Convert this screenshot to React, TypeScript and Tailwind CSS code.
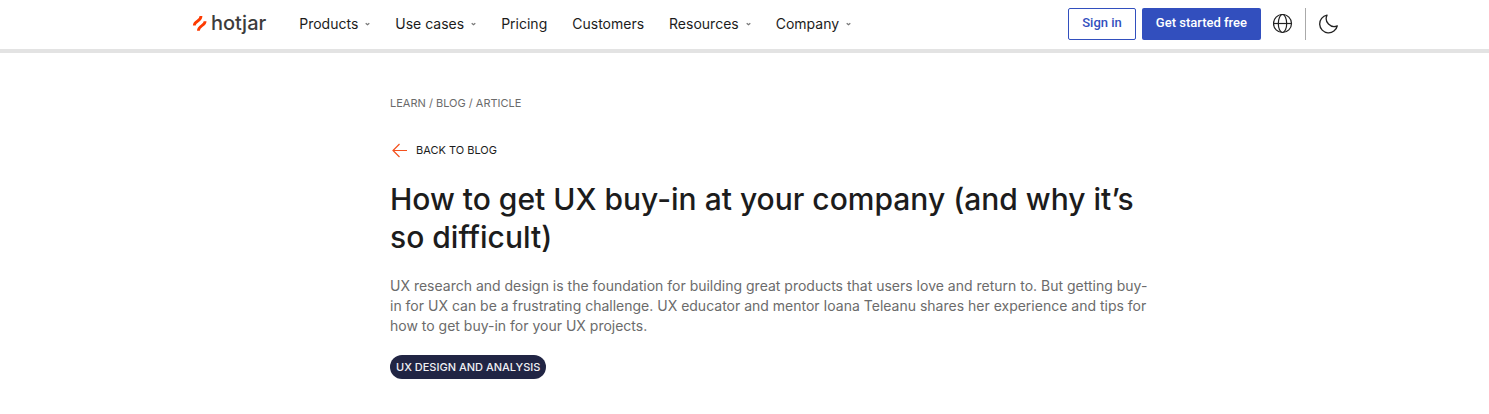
import type { ReactNode } from 'react';

interface NavItem {
  label: string;
  hasMenu: boolean;
}

const NAV_ITEMS: NavItem[] = [
  { label: 'Products', hasMenu: true },
  { label: 'Use cases', hasMenu: true },
  { label: 'Pricing', hasMenu: false },
  { label: 'Customers', hasMenu: false },
  { label: 'Resources', hasMenu: true },
  { label: 'Company', hasMenu: true },
];

function Logo() {
  return (
    <a href="#" aria-label="hotjar home" className="flex items-center gap-1 pb-[2px] text-[#3c3c3c]">
      <svg width="15" height="15" viewBox="0 0 15 15" fill="none" stroke="#fd3a01" strokeWidth="2.8">
        <path d="M2.3 9.4C2.3 4.8 9 5.6 9 0" />
        <path d="M6.4 14.8C6.4 9.2 13.1 10 13.1 5.2" />
      </svg>
      <span className="text-[20px] leading-6 font-medium">hotjar</span>
    </a>
  );
}

function Caret() {
  return (
    <svg width="5" height="4" viewBox="0 0 5 4" fill="none" stroke="#777" strokeWidth="1.2">
      <path d="M0.7 1.2L2.5 2.8L4.3 1.2" />
    </svg>
  );
}

function NavEntry({ item }: { item: NavItem }) {
  if (!item.hasMenu) {
    return <a href="#" className="hover:underline">{item.label}</a>;
  }
  return (
    <button type="button" className="flex items-center gap-[7px]">
      {item.label}
      <Caret />
    </button>
  );
}

function IconButton({ label, children }: { label: string; children: ReactNode }) {
  return (
    <button type="button" aria-label={label} className="flex size-5 items-center justify-center text-[#222]">
      {children}
    </button>
  );
}

function Header() {
  return (
    <header className="border-b-4 border-[#e3e3e3]">
      <div className="mx-auto flex w-full max-w-[1189px] items-center pt-2 pb-[9px] pl-[42px]">
        <Logo />
        <nav className="ml-[33px] flex items-center gap-[25px] pb-px text-[14px] leading-5 text-[#1c1c1c]">
          {NAV_ITEMS.map((item) => <NavEntry key={item.label} item={item} />)}
        </nav>
        <div className="ml-auto flex items-center font-['Roboto',sans-serif] text-[13px] leading-5 font-medium">
          <button type="button" className="h-8 rounded-xs border border-[#324fbe] px-[13px] pb-[2px] text-[#324fbe]">Sign in</button>
          <button type="button" className="ml-[6px] mr-3 h-8 rounded-xs bg-[#324fbe] px-[14px] pb-[2px] text-white">Get started free</button>
          <IconButton label="Language">
            <svg width="20" height="20" viewBox="0 0 20 20" fill="none" stroke="currentColor" strokeWidth="1.2">
              <circle cx="9.5" cy="9.5" r="9" />
              <ellipse cx="9.5" cy="9.5" rx="4.2" ry="9" />
              <path d="M0.5 9.5H18.5" />
            </svg>
          </IconButton>
          <span className="mx-3 mr-[13px] h-8 w-px bg-[#aaa]" />
          <IconButton label="Dark mode">
            <svg width="20" height="20" viewBox="0 0 20 20" fill="none" stroke="currentColor" strokeWidth="1.3" strokeLinejoin="round">
              <path d="M8 1.2A8.9 8.9 0 1 0 18.3 11.8A7.9 7.9 0 0 1 8 1.2Z" />
            </svg>
          </IconButton>
        </div>
      </div>
    </header>
  );
}

function Article() {
  return (
    <main className="mx-auto w-full max-w-[1189px] pl-60">
      <div className="max-w-[768px] pt-10">
        <nav aria-label="Breadcrumb" className="text-[11px] leading-5 text-[#6b6b6b]">
          <a href="#">LEARN</a> / <a href="#">BLOG</a> / <a href="#">ARTICLE</a>
        </nav>
        <a href="#" className="mt-[27px] flex items-center gap-2 text-[11px] leading-5 text-[#1c1c1c]">
          <svg width="18" height="16" viewBox="0 0 18 16" fill="none" stroke="#f4511e" strokeWidth="1.2">
            <path d="M17 8.5H3M9.5 2L3 8.5L9.5 15" />
          </svg>
          BACK TO BLOG
        </a>
        <h1 className="mt-5 text-[30px] leading-[38px] font-medium text-[#1c1c1c]">
          How to get UX buy-in at your company (and why it’s so difficult)
        </h1>
        <p className="mt-5 text-[14px] leading-5 text-[#6b6b6b]">
          UX research and design is the foundation for building great products that users love and return to. But getting buy-in for UX can be a frustrating challenge. UX educator and mentor Ioana Teleanu shares her experience and tips for how to get buy-in for your UX projects.
        </p>
        <a href="#" className="mt-[19px] inline-block rounded-full bg-[#212544] px-[6px] text-[11px] leading-6 font-medium text-[#f0f0f4]">
          UX DESIGN AND ANALYSIS
        </a>
      </div>
    </main>
  );
}

export default function App() {
  return (
    <div className="bg-white font-['Inter',sans-serif]">
      <Header />
      <Article />
    </div>
  );
}
